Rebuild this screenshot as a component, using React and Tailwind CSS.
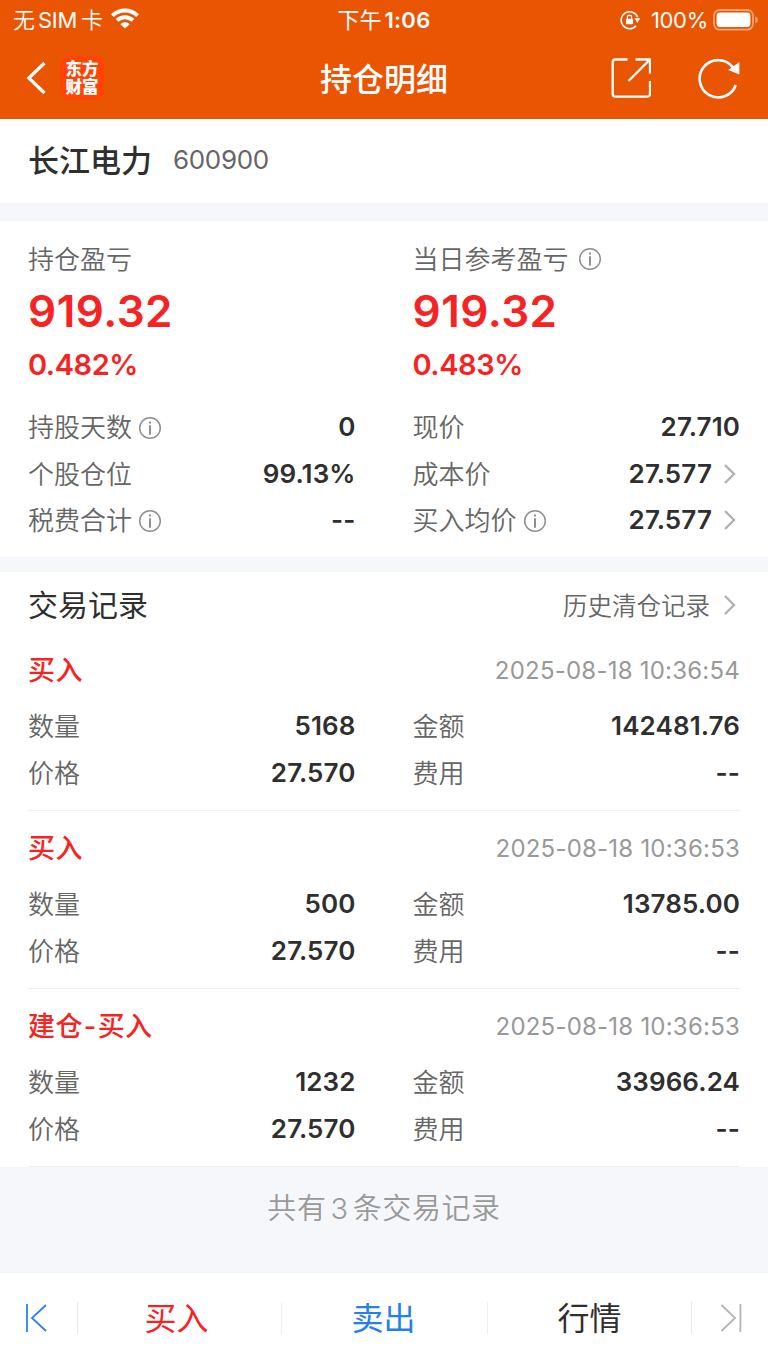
import React from "react";

const FONT = "font-[Inter,'Noto_Sans_CJK_SC',sans-serif]";

function InfoIcon({ className = "" }) {
  return (
    <svg viewBox="0 0 24 24" className={"h-6 w-6 shrink-0 " + className} fill="none" stroke="#8f8f8f">
      <circle cx="12" cy="12" r="10.3" strokeWidth="1.5" />
      <path d="M12 9.3V18.8" strokeWidth="2" />
      <path d="M12 5.6V7.6" strokeWidth="2" />
    </svg>
  );
}

function Chevron({ className = "ml-3" }) {
  return (
    <svg viewBox="0 0 12 20" className={"mr-[4px] h-5 w-3 shrink-0 " + className} fill="none" stroke="#b2b2b2" strokeWidth="2.4">
      <path d="M1 1L10 10L1 19" />
    </svg>
  );
}

function Row({ label, value, info, arrow }) {
  return (
    <div className="flex h-[46.5px] items-center justify-between">
      <div className="flex items-center pt-0.5 text-[26px] text-[#666]">
        <span className="font-[350]">{label}</span>
        {info && <InfoIcon className="ml-[6px]" />}
      </div>
      <div className="flex items-center text-[26px] font-semibold text-[#2f2f2f]">
        <span className="tracking-[0.1px]">{value}</span>
        {arrow && <Chevron />}
      </div>
    </div>
  );
}

function Summary({ label, value, percent, info }) {
  return (
    <div className="flex flex-col">
      <div className="flex h-[42px] items-center text-[26px] text-[#666]">
        <span className="pt-px font-[350]">{label}</span>
        {info && <InfoIcon className="ml-[9px]" />}
      </div>
      <div className="flex h-[62px] items-center text-[44px] font-semibold tracking-[0.5px] text-[#f72323]">{value}</div>
      <div className="flex h-[44px] items-center text-[29px] font-semibold tracking-[-0.45px] text-[#f72323]">{percent}</div>
    </div>
  );
}

function RecordItem({ type, time, count, amount }) {
  return (
    <div className="mx-7 h-[178px] border-b border-[#f0f1f2] pt-[14px]">
      <div className="flex h-[46px] items-center justify-between">
        <span className="flex pt-px text-[27px] font-medium tracking-[0.4px] text-[#f72323]">
          {type.split("-").map((part, i) => (
            <React.Fragment key={i}>
              {i > 0 && <span className="mx-px">-</span>}
              <span>{part}</span>
            </React.Fragment>
          ))}
        </span>
        <span className="pt-px text-[24px] tracking-[0.22px] text-[#999]">{time}</span>
      </div>
      <div className="mt-[10px] grid grid-cols-2 gap-x-[57px]">
        <Row label="数量" value={count} />
        <Row label="金额" value={amount} />
        <Row label="价格" value="27.570" />
        <Row label="费用" value="--" />
      </div>
    </div>
  );
}

function StatusBar() {
  return (
    <div className="grid h-10 grid-cols-3 items-center text-[22px] text-white">
      <div className="flex items-center pl-[13px]">
        <span className="font-[350]">无</span>
        <span className="ml-[3px] tracking-[-0.3px]">SIM</span>
        <span className="ml-[4px] font-[350]">卡</span>
        <svg viewBox="0 0 28 21" className="mb-1 ml-[8px] h-[21px] w-7" fill="none" stroke="#fff" strokeWidth="4">
          <path d="M1.4 7.6C8.4 .7 19.6 .7 26.6 7.6" />
          <path d="M6.1 12.4C10.5 8.2 17.5 8.2 21.9 12.4" />
          <path d="M14 20.5L9.4 16.2C12 13.7 16 13.7 18.6 16.2Z" fill="#fff" stroke="none" />
        </svg>
      </div>
      <div className="flex items-center justify-center">
        <span>下午</span>
        <span className="ml-[3px] font-semibold tracking-[0.3px]">1:06</span>
      </div>
      <div className="flex items-center justify-end pr-[9px]">
        <svg viewBox="0 0 20 20" className="mr-[11px] h-5 w-5" fill="none" stroke="#fff">
          <path d="M17.6 7.2A8.5 8.5 0 1 0 16 15.9" strokeWidth="1.6" />
          <path d="M14.4 8.2H20.4L17.4 12.8Z" fill="#fff" stroke="none" />
          <rect x="6" y="8.7" width="7" height="5.6" rx="0.8" fill="#fff" stroke="none" />
          <path d="M7.4 9V7.2a2.1 2.1 0 0 1 4.2 0V9" strokeWidth="1.2" />
        </svg>
        <span className="tracking-[-0.3px]">100%</span>
        <svg viewBox="0 0 46 22" className="mb-px ml-[5px] h-[22px] w-[46px]" fill="none">
          <rect x="1" y="1" width="39" height="19.6" rx="5.5" stroke="#fff" strokeOpacity=".45" strokeWidth="1.8" />
          <rect x="3.6" y="3.6" width="33.8" height="14.4" rx="3.4" fill="#fff" />
          <path d="M42.4 7.4C45.6 8.4 45.6 13.2 42.4 14.2Z" fill="#fff" fillOpacity=".5" />
        </svg>
      </div>
    </div>
  );
}

function NavBar() {
  return (
    <div className="grid h-[79px] grid-cols-3 items-center">
      <div className="flex items-center pb-1 pl-[26px]">
        <svg viewBox="0 0 20 34" className="h-[34px] w-5" fill="none" stroke="#fff" strokeWidth="3.2">
          <path d="M18.5 2L2.8 17L18.5 32" />
        </svg>
        <div className="ml-[14px] flex h-11 w-11 flex-col items-center justify-center rounded-[9px] bg-[#ff4405] pt-px text-[16.5px] leading-[18px] font-black text-white">
          <span>东方</span>
          <span>财富</span>
        </div>
      </div>
      <h1 className="text-center text-[32px] font-medium text-white">持仓明细</h1>
      <div className="flex items-center justify-end pr-[27px] pb-[3px]">
        <svg viewBox="0 0 40 42" className="h-[42px] w-10" fill="none" stroke="#fff" strokeWidth="2.3">
          <path d="M16.5 2.5H4.4Q1.7 2.5 1.7 5.2V37Q1.7 39.7 4.4 39.7H36.3Q39 39.7 39 37V24" />
          <path d="M24.5 2.5H39V16.5M38.5 3L17.5 24" />
        </svg>
        <svg viewBox="0 0 44 44" className="mb-px ml-[46px] h-11 w-11" fill="none" stroke="#fff" strokeWidth="2.6">
          <path d="M38.8 29A18.6 18.6 0 1 1 36 11.4" />
          <path d="M42.4 6V18.4L31.2 14Z" fill="#fff" stroke="none" />
        </svg>
      </div>
    </div>
  );
}

const records = [
  { type: "买入", time: "2025-08-18 10:36:54", count: "5168", amount: "142481.76" },
  { type: "买入", time: "2025-08-18 10:36:53", count: "500", amount: "13785.00" },
  { type: "建仓-买入", time: "2025-08-18 10:36:53", count: "1232", amount: "33966.24" },
];

export default function App() {
  return (
    <div className={"flex h-[1366px] w-[768px] flex-col overflow-hidden bg-[#f6f7fa] leading-none " + FONT}>
      <header className="h-[119px] shrink-0 bg-[#ea5504]">
        <StatusBar />
        <NavBar />
      </header>

      <section className="flex h-[84px] shrink-0 items-center bg-white px-7 pb-0.5">
        <span className="text-[31px] font-medium text-[#2f2f2f]">长江电力</span>
        <span className="ml-[21px] text-[26px] tracking-[-0.35px] text-[#666]">600900</span>
      </section>

      <section className="mt-[18px] h-[336px] shrink-0 bg-white px-7 pt-[17px]">
        <div className="grid grid-cols-2 gap-x-[57px]">
          <Summary label="持仓盈亏" value="919.32" percent="0.482%" />
          <Summary label="当日参考盈亏" value="919.32" percent="0.483%" info />
        </div>
        <div className="mt-[18px] grid grid-cols-2 gap-x-[57px]">
          <Row label="持股天数" value="0" info />
          <Row label="现价" value="27.710" />
          <Row label="个股仓位" value="99.13%" />
          <Row label="成本价" value="27.577" arrow />
          <Row label="税费合计" value="--" info />
          <Row label="买入均价" value="27.577" info arrow />
        </div>
      </section>

      <section className="mt-[15px] shrink-0 bg-white">
        <div className="flex h-[61px] items-center justify-between px-7 pt-[5px]">
          <h2 className="text-[30px] text-[#2f2f2f]">交易记录</h2>
          <div className="flex items-center text-[24.5px] text-[#666]">
            <span className="pt-0.5 font-[350]">历史清仓记录</span>
            <Chevron className="ml-[14px]" />
          </div>
        </div>
        {records.map((r, i) => (
          <RecordItem key={i} {...r} />
        ))}
      </section>

      <div className="flex flex-1 justify-center pt-[27px] text-[29px] font-[350] tracking-[0.6px] text-[#999]">
        <span>共有</span>
        <span className="mx-[4px]">3</span>
        <span>条交易记录</span>
      </div>

      <nav className="flex h-[94px] shrink-0 items-center border-t border-[#eeeff1] bg-white pb-[3px] text-[32px]">
        <div className="flex h-8 w-[78px] items-center border-r border-[#e8e8e8] pl-[26px]">
          <svg viewBox="0 0 22 28" className="h-7 w-[22px]" fill="none" stroke="#2f80ed" strokeWidth="1.8">
            <path d="M1 0V28M20 1L6 14L20 27" />
          </svg>
        </div>
        <div className="flex h-8 w-[204px] items-center justify-center border-r border-[#efefef] pt-px pr-1.5 text-[#f72323]">买入</div>
        <div className="flex h-8 w-[206px] items-center justify-center border-r border-[#efefef] pt-px pr-0.5 text-[#2680eb]">卖出</div>
        <div className="flex h-8 w-[204px] items-center justify-center border-r border-[#e8e8e8] pt-px text-[#2f2f2f]">行情</div>
        <div className="flex h-8 flex-1 items-center justify-end pr-[26px]">
          <svg viewBox="0 0 22 28" className="h-7 w-[22px]" fill="none" stroke="#b5b5b5" strokeWidth="1.8">
            <path d="M20.4 0V28M1.5 1L15 14L1.5 27" />
          </svg>
        </div>
      </nav>
    </div>
  );
}
